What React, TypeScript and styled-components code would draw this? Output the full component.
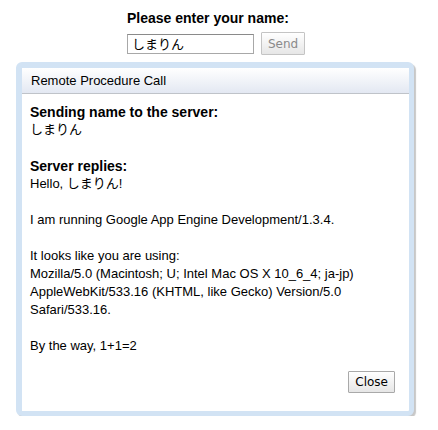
import React from "react";
import styled, { createGlobalStyle } from "styled-components";

const Global = createGlobalStyle`
  html, body { margin: 0; padding: 0; background: #ffffff; }
  body {
    font-family: "Liberation Sans", Arial, "Noto Sans CJK JP", sans-serif;
    font-size: 13px;
    color: #000;
  }
`;

const Page = styled.div`
  width: 398px;
  margin-left: 16px;
  padding-top: 10px;
  display: flex;
  flex-direction: column;
  align-items: center;
`;

const Form = styled.div`
  width: 176px;
  display: flex;
  flex-direction: column;
  gap: 6px;
`;

const Title = styled.div`
  font-weight: bold;
  font-size: 14px;
  line-height: 16px;
  white-space: nowrap;
`;

const Row = styled.div`
  display: flex;
  align-items: center;
  gap: 7px;
`;

const NameInput = styled.input`
  box-sizing: border-box;
  width: 127px;
  height: 20px;
  margin: 0;
  padding: 0 4px;
  border: 1px solid #a8a8a8;
  border-top-color: #8a8a8a;
  font-family: "Liberation Sans", Arial, "Noto Sans CJK JP", sans-serif;
  font-size: 13px;
  color: #000;
  outline: none;
`;

const Button = styled.button<{ $disabled?: boolean }>`
  box-sizing: border-box;
  height: ${(p) => (p.$disabled ? "23px" : "22px")};
  margin: 0;
  padding: 0 6px;
  border: 1px solid ${(p) => (p.$disabled ? "#c4c4c4" : "#a9a9a9")};
  border-radius: 1px;
  background: linear-gradient(#ffffff, #e6e6e6);
  font-family: "DejaVu Sans", "Liberation Sans", sans-serif;
  font-size: 12px;
  color: ${(p) => (p.$disabled ? "#8a8a8a" : "#000")};
  cursor: default;
`;

const Dialog = styled.div`
  box-sizing: border-box;
  margin-top: 7px;
  width: 398px;
  border: 6px solid #d2e3f4;
  border-right-width: 5px;
  border-bottom-width: 5px;
  border-radius: 6px;
  background: #ffffff;
  box-shadow: 2px 2px 1px rgba(0, 0, 0, 0.22);
`;

const Caption = styled.div`
  height: 26px;
  box-sizing: border-box;
  padding-left: 9px;
  display: flex;
  align-items: center;
  border-bottom: 1px solid #bfc3c9;
  background: linear-gradient(#ffffff, #e3e8f2);
  font-size: 13px;
`;

const Body = styled.div`
  padding: 9px 14px 18px 8px;
  display: flex;
  flex-direction: column;
`;

const Message = styled.div`
  font-size: 13px;
  line-height: 18px;
`;

const Strong = styled.b`
  font-size: 14px;
  line-height: 18px;
  vertical-align: top;
`;

const Footer = styled.div`
  display: flex;
  justify-content: flex-end;
  margin-top: 16px;
`;

export default function App() {
  return (
    <>
      <Global />
      <Page>
        <Form>
          <Title>Please enter your name:</Title>
          <Row>
            <NameInput defaultValue="しまりん" />
            <Button $disabled>Send</Button>
          </Row>
        </Form>
        <Dialog>
          <Caption>Remote Procedure Call</Caption>
          <Body>
            <Message>
              <Strong>Sending name to the server:</Strong>
              <br />
              しまりん
              <br />
              <br />
              <Strong>Server replies:</Strong>
              <br />
              Hello, しまりん!
              <br />
              <br />
              I am running Google App Engine Development/1.3.4.
              <br />
              <br />
              It looks like you are using:
              <br />
              Mozilla/5.0 (Macintosh; U; Intel Mac OS X 10_6_4; ja-jp)
              <br />
              AppleWebKit/533.16 (KHTML, like Gecko) Version/5.0
              <br />
              Safari/533.16.
              <br />
              <br />
              By the way, 1+1=2
            </Message>
            <Footer>
              <Button>Close</Button>
            </Footer>
          </Body>
        </Dialog>
      </Page>
    </>
  );
}
